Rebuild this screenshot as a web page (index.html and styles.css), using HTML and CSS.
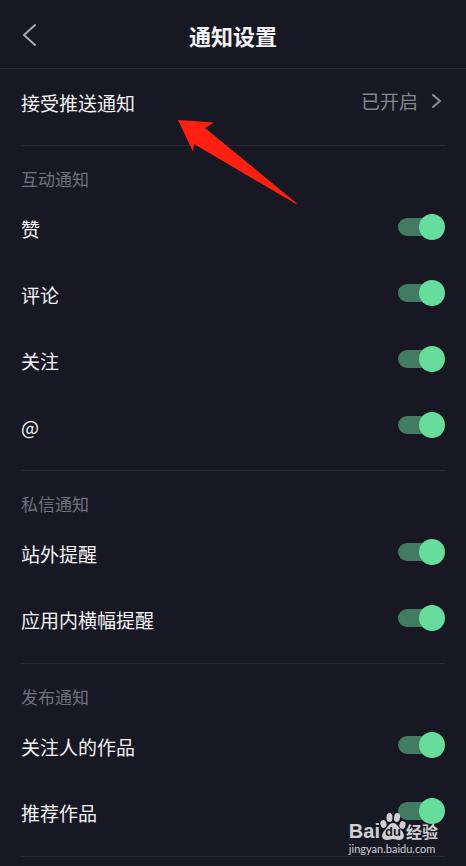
FILE: index.html
```html
<!DOCTYPE html>
<html lang="zh-CN">
<head>
<meta charset="utf-8">
<meta name="viewport" content="width=device-width, initial-scale=1">
<title>通知设置</title>
<link rel="stylesheet" href="styles.css">
</head>
<body>
<header class="topbar">
  <button class="back" type="button" aria-label="返回">
    <svg width="18" height="24" viewBox="0 0 18 24"><path d="M15 2 4 12l11 10"/></svg>
  </button>
  <h1 class="title">通知设置</h1>
</header>
<main class="settings">
  <a class="push" href="#push">
    <span class="label">接受推送通知</span>
    <span class="value">已开启</span>
    <svg class="chevron" width="10" height="14" viewBox="0 0 10 14"><path d="m1 1 7 6-7 6"/></svg>
    <svg class="arrow" width="120" height="86" viewBox="0 0 120 86"><path d="M0 0 36 2.500 27 8 119 83.500 118 84 16 24 15 31.500Z"/></svg>
  </a>
  <section class="group">
    <h2 class="heading">互动通知</h2>
    <label class="row"><span class="label">赞</span><input class="switch" type="checkbox" role="switch" checked></label>
    <label class="row"><span class="label">评论</span><input class="switch" type="checkbox" role="switch" checked></label>
    <label class="row"><span class="label">关注</span><input class="switch" type="checkbox" role="switch" checked></label>
    <label class="row"><span class="label">@</span><input class="switch" type="checkbox" role="switch" checked></label>
  </section>
  <section class="group">
    <h2 class="heading">私信通知</h2>
    <label class="row"><span class="label">站外提醒</span><input class="switch" type="checkbox" role="switch" checked></label>
    <label class="row"><span class="label">应用内横幅提醒</span><input class="switch" type="checkbox" role="switch" checked></label>
  </section>
  <section class="group">
    <h2 class="heading">发布通知</h2>
    <label class="row"><span class="label">关注人的作品</span><input class="switch" type="checkbox" role="switch" checked></label>
    <label class="row"><span class="label">推荐作品</span><input class="switch" type="checkbox" role="switch" checked></label>
  </section>
</main>
<div class="watermark">
  <div class="brand">
    <span class="bai">Bai</span>
    <span class="paw">
      <svg width="26" height="28" viewBox="0 0 26 28"><ellipse cx="3.500" cy="11" rx="3" ry="4" transform="rotate(-15 3.500 11)"/><ellipse cx="9.500" cy="4.500" rx="3" ry="4.500"/><ellipse cx="17" cy="4.500" rx="3" ry="4.500" transform="rotate(8 17 4.500)"/><ellipse cx="22.500" cy="12" rx="3" ry="4" transform="rotate(15 22.500 12)"/><path d="M13 10c4 0 5 4 8 7 5 5 3 10-2 10-3 0-4-1-6-1s-3 1-6 1c-5 0-7-5-2-10 3-3 4-7 8-7Z"/></svg>
      <span class="du">du</span>
    </span>
    <span class="jy">经验</span>
  </div>
  <div class="site">jingyan.baidu.com</div>
</div>
</body>
</html>
```
FILE: styles.css
```css
* {
  box-sizing: border-box;
}

body {
  margin: 0;
  background: #181824;
  color: #f2f2f4;
  font-family: "Noto Sans CJK SC", sans-serif;
  font-size: 19px;
  line-height: 28px;
  min-height: 100vh;
  position: relative;
}

.topbar {
  display: grid;
  grid-template-columns: 24px 1fr 24px;
  align-items: center;
  padding: 19px 20px 17px;
  border-bottom: 1px solid #292934;
}

.back {
  display: flex;
  padding: 0;
  border: 0;
  background: none;
}

.back path,
.chevron path {
  fill: none;
  stroke: #a9a9b1;
  stroke-width: 2;
  stroke-linecap: round;
}

.chevron path {
  stroke: #8d8d97;
}

.title {
  margin: 0;
  font-size: 22px;
  line-height: 32px;
  font-weight: 700;
  text-align: center;
}

.settings {
  padding: 0 21px;
}

.push {
  display: flex;
  align-items: center;
  gap: 14px;
  height: 76px;
  padding-bottom: 12px;
  color: inherit;
  text-decoration: none;
  position: relative;
}

.label {
  flex: 1;
  padding-top: 4px;
}

.value {
  color: #85858f;
}

.chevron {
  margin-right: 3px;
}

.arrow {
  position: absolute;
  left: 157px;
  top: 51px;
  fill: #ff2012;
}

.group {
  border-top: 1px solid #282833;
  padding-bottom: 12px;
}

.group:last-child {
  border-bottom: 1px solid #282833;
}

.heading {
  margin: 0;
  padding: 21px 0 3px;
  font-size: 17px;
  line-height: 24px;
  font-weight: 400;
  color: #71717c;
}

.row {
  display: flex;
  align-items: center;
  height: 66px;
}

.switch {
  appearance: none;
  display: grid;
  align-items: center;
  width: 47px;
  height: 26px;
  margin: 0;
}

.switch::before,
.switch::after {
  content: "";
  grid-area: 1 / 1;
}

.switch::before {
  width: 38px;
  height: 18px;
  border-radius: 9px;
  background: #417b60;
}

.switch::after {
  width: 26px;
  height: 26px;
  justify-self: end;
  border-radius: 50%;
  background: #66dc9d;
}

.watermark {
  position: absolute;
  right: 28px;
  bottom: 9px;
  color: #d0d0d4;
}

.brand {
  display: flex;
  align-items: flex-end;
  height: 28px;
}

.bai {
  font: 700 20px/20px "Liberation Sans", sans-serif;
}

.paw {
  position: relative;
  display: flex;
  fill: #d0d0d4;
}

.du {
  position: absolute;
  left: 5px;
  bottom: 2px;
  color: #181824;
  font: 700 13px/14px "Liberation Sans", sans-serif;
}

.jy {
  font-size: 16px;
  line-height: 20px;
  font-weight: 700;
}

.site {
  font: 11px/16px Lato, sans-serif;
}
```
